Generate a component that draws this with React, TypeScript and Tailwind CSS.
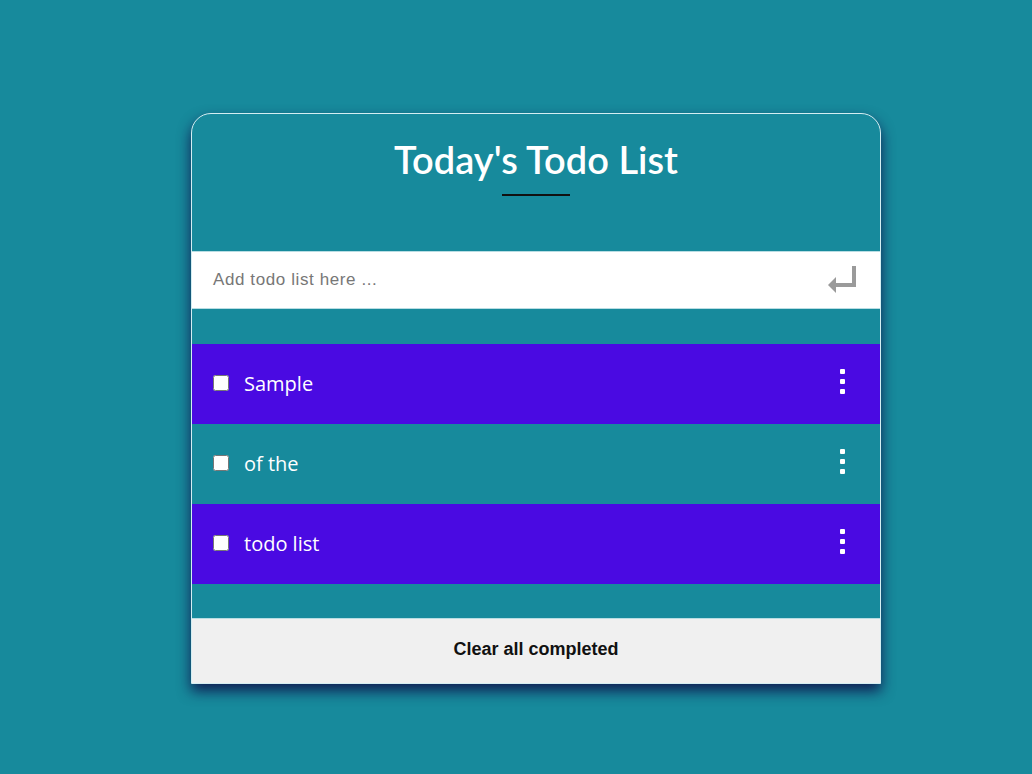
const TODOS = [
  { id: 1, text: 'Sample', hi: true },
  { id: 2, text: 'of the', hi: false },
  { id: 3, text: 'todo list', hi: true },
];

function EnterIcon() {
  return (
    <svg width="34" height="32" viewBox="0 0 34 32" fill="none">
      <path d="M28 2 V21 H9" stroke="#9a9a9a" strokeWidth="4" />
      <path d="M2 21 L10 13 V29 Z" fill="#9a9a9a" />
    </svg>
  );
}

function Kebab() {
  return (
    <div className="flex flex-col gap-[5px]">
      <span className="w-[5px] h-[5px] rounded-[1px] bg-white" />
      <span className="w-[5px] h-[5px] rounded-[1px] bg-white" />
      <span className="w-[5px] h-[5px] rounded-[1px] bg-white" />
    </div>
  );
}

export default function App() {
  return (
    <div className="min-h-screen w-full bg-[#178a9c] pt-[113px] pl-[191px]">
      <div className="w-[690px] rounded-t-[20px] border border-[#d4eef2] bg-[#178a9c] shadow-[0_7px_14px_rgba(15,10,70,0.85)]">
        {/* Header */}
        <div className="flex flex-col items-center pt-[21px] h-[137px]">
          <h1 className="text-white text-[38px] leading-[48px] font-semibold" style={{ fontFamily: 'Lato, sans-serif' }}>
            Today's Todo List
          </h1>
          <div className="mt-[11px] w-[68px] h-[2px] bg-[#111]" />
        </div>

        {/* Input */}
        <div className="flex items-center justify-between h-[58px] bg-white border-y border-[#b8dde3] pl-[21px] pr-[20px]">
          <span className="text-[17px] tracking-[0.6px] text-[#777]" style={{ fontFamily: '"Liberation Sans", Arial, sans-serif' }}>
            Add todo list here ...
          </span>
          <EnterIcon />
        </div>

        {/* List */}
        <div className="pt-[35px] pb-[34px]">
          {TODOS.map((t) => (
            <div key={t.id} className={`flex items-center h-[80px] pl-[21px] pr-[35px] ${t.hi ? 'bg-[#4a0ae2]' : 'bg-[#178a9c]'}`}>
              <input type="checkbox" className="w-[16px] h-[16px] m-0 mb-[2px]" />
              <span className="ml-[15px] text-white text-[20px]" style={{ fontFamily: '"Open Sans", sans-serif' }}>
                {t.text}
              </span>
              <div className="ml-auto mb-[6px]">
                <Kebab />
              </div>
            </div>
          ))}
        </div>

        {/* Footer */}
        <div className="flex items-center justify-center h-[65px] pb-[3px] bg-[#f0f0f0] border-t border-[#b8dde3]">
          <span className="text-[18px] font-bold text-[#111]" style={{ fontFamily: '"Liberation Sans", Arial, sans-serif' }}>
            Clear all completed
          </span>
        </div>
      </div>
    </div>
  );
}
